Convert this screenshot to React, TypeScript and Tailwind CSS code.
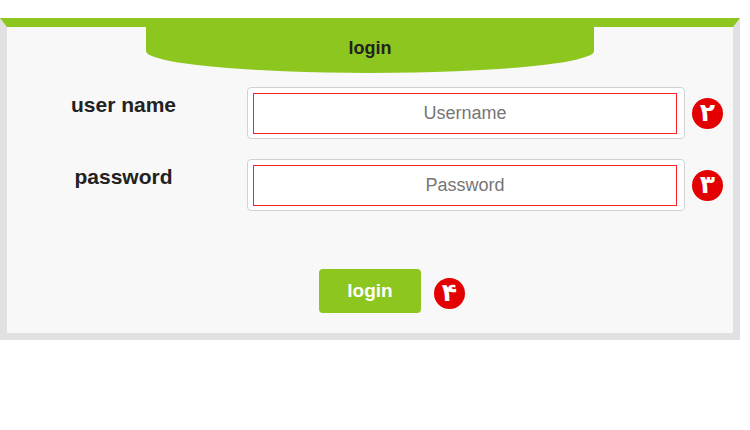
import React from "react";

const GREEN = "bg-[#8cc61e]";

function Badge({ n, className = "" }: { n: string; className?: string }) {
  return (
    <div
      className={`flex h-[31px] w-[31px] items-center justify-center rounded-full bg-[#e30000] font-['DejaVu_Sans',sans-serif] text-[25px] font-bold leading-none text-white ${className}`}
    >
      <span className="-mt-[2px]">{n}</span>
    </div>
  );
}

function Field({ label, placeholder, badge, type = "text", className = "" }: { label: string; placeholder: string; badge: string; type?: string; className?: string }) {
  return (
    <div className={`flex items-start ${className}`}>
      <label className="w-[233px] pt-[6px] text-center text-[21px] leading-[24px] font-bold text-[#222]">{label}</label>
      <div className="ml-[7px] h-[52px] w-[438px] rounded-[4px] border border-[#d2d2d2] bg-white pt-[5px] pl-[5px]">
        <input
          type={type}
          placeholder={placeholder}
          className="block h-[41px] w-[424px] border border-[#ff1f26] bg-white text-center text-[18px] text-[#555] outline-none placeholder:text-[#767676]"
        />
      </div>
      <Badge n={badge} className="ml-[7px] self-center" />
    </div>
  );
}

export default function App() {
  return (
    <div className="h-[430px] w-[750px] bg-white pt-[18px] font-['Liberation_Sans',Arial,sans-serif]">
      <div className="w-[740px] border-x-[7px] border-t-[9px] border-b-[7px] border-x-[#e1e1e1] border-t-[#8cc61e] border-b-[#e1e1e1] bg-[#f8f8f8] pb-[20px]">
        <div className={`mx-auto flex h-[46px] w-[448px] justify-center rounded-b-[50%_22px] pt-[11px] ${GREEN}`}>
          <span className="text-[18px] leading-[21px] font-bold text-[#222]">login</span>
        </div>

        <Field label="user name" placeholder="Username" badge="۲" className="mt-[14px]" />
        <Field label="password" placeholder="Password" badge="۳" type="password" className="mt-[20px]" />

        <div className="mt-[58px] flex justify-center">
          <div className="relative">
            <button className={`h-[44px] w-[102px] rounded-[4px] text-[19px] font-bold text-white ${GREEN}`}>login</button>
            <Badge n="۴" className="absolute top-[9px] left-[calc(100%+13px)]" />
          </div>
        </div>
      </div>
    </div>
  );
}
